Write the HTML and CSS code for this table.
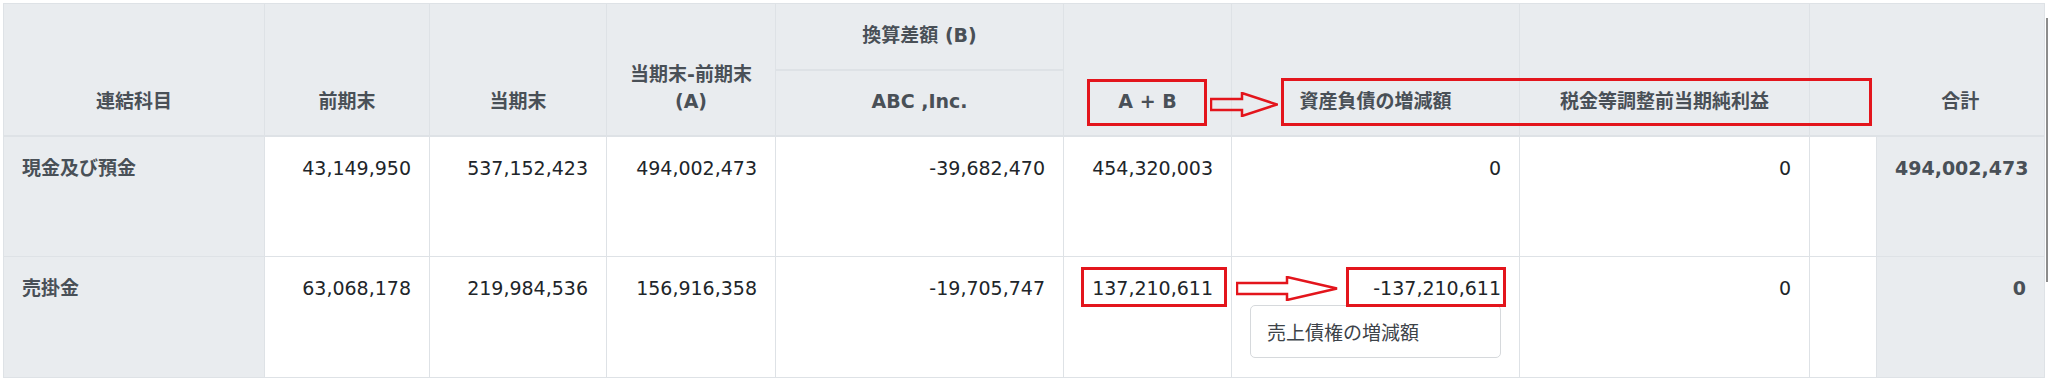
FILE: index.html
```html
<!DOCTYPE html>
<html lang="ja">
<head>
<meta charset="utf-8">
<title>連結科目</title>
<link rel="stylesheet" href="styles.css">
</head>
<body>
<div class="wrap">
  <table class="grid">
    <colgroup>
      <col class="c1"><col class="c2"><col class="c3"><col class="c4"><col class="c5">
      <col class="c6"><col class="c7"><col class="c8"><col class="c9"><col class="c10">
    </colgroup>
    <thead>
      <tr class="hr1">
        <th rowspan="2">連結科目</th>
        <th rowspan="2">前期末</th>
        <th rowspan="2">当期末</th>
        <th rowspan="2">当期末-前期末<br>(A)</th>
        <th>換算差額 (B)</th>
        <th rowspan="2">A + B</th>
        <th rowspan="2">資産負債の増減額</th>
        <th rowspan="2">税金等調整前当期純利益</th>
        <th rowspan="2" class="gap-h"></th>
        <th rowspan="2" class="sum-h">合計</th>
      </tr>
      <tr class="hr2">
        <th>ABC ,Inc.</th>
      </tr>
    </thead>
    <tbody>
      <tr class="br">
        <th>現金及び預金</th>
        <td>43,149,950</td>
        <td>537,152,423</td>
        <td>494,002,473</td>
        <td>-39,682,470</td>
        <td>454,320,003</td>
        <td>0</td>
        <td>0</td>
        <td class="gap"></td>
        <td class="total">494,002,473</td>
      </tr>
      <tr class="br">
        <th>売掛金</th>
        <td>63,068,178</td>
        <td>219,984,536</td>
        <td>156,916,358</td>
        <td>-19,705,747</td>
        <td>137,210,611</td>
        <td>
          <div>-137,210,611</div>
          <div class="note">売上債権の増減額</div>
        </td>
        <td>0</td>
        <td class="gap"></td>
        <td class="total">0</td>
      </tr>
    </tbody>
  </table>

  <div class="annot a1"></div>
  <div class="annot a2"></div>
  <div class="annot a3"></div>
  <div class="annot a4"></div>

  <svg class="arrow arr1" width="68" height="25" viewBox="0 0 68 25">
    <path d="M1 7 H32 V1 L67 12.5 L32 24 V18 H1 Z" fill="none" stroke="#e3151c" stroke-width="2.5" stroke-linejoin="miter"/>
  </svg>
  <svg class="arrow arr2" width="102" height="25" viewBox="0 0 102 25">
    <path d="M1 7 H51 V1 L101 12.5 L51 24 V18 H1 Z" fill="none" stroke="#e3151c" stroke-width="2.5" stroke-linejoin="miter"/>
  </svg>

  <div class="scroll"></div>
</div>
</body>
</html>
```

FILE: styles.css
```css
html, body {
  margin: 0;
  padding: 0;
  background: #ffffff;
}

body {
  font-family: "DejaVu Sans", "Noto Sans CJK JP", sans-serif;
  font-size: 19px;
  line-height: 27px;
  color: #212529;
}

.wrap {
  position: relative;
  padding: 3px 0 0 3px;
  width: 2045px;
  height: 377px;
  overflow: hidden;
}

.grid {
  border-collapse: collapse;
  table-layout: fixed;
  width: 2042px;
}

.c1 { width: 261px; }
.c2 { width: 165px; }
.c3 { width: 177px; }
.c4 { width: 169px; }
.c5 { width: 288px; }
.c6 { width: 168px; }
.c7 { width: 288px; }
.c8 { width: 290px; }
.c9 { width: 67px; }
.c10 { width: 168px; }

.grid th,
.grid td {
  border: 1px solid #dee2e6;
  padding: 18px;
}

.grid thead th {
  background: #e9ecef;
  color: #495057;
  font-weight: bold;
  text-align: center;
  vertical-align: bottom;
  border-bottom: 2px solid #dee2e6;
  padding: 0 8px 20px;
}

.hr1 { height: 66px; }
.hr2 { height: 66px; }

.grid thead th.gap-h {
  border-right-style: hidden;
}

.grid thead th.sum-h {
  border-left-style: hidden;
}

.br { height: 121px; }

.grid tbody th {
  background: #e9ecef;
  color: #495057;
  font-weight: bold;
  text-align: left;
  vertical-align: top;
}

.grid tbody td {
  text-align: right;
  vertical-align: top;
}

.grid tbody td.total {
  background: #e9ecef;
  color: #495057;
  font-weight: bold;
}

.note {
  margin-top: 3px;
  border: 1px solid #d6d9dc;
  border-radius: 5px;
  padding: 12px 16px;
  text-align: left;
  color: #3d4349;
  font-family: "Noto Sans CJK JP", sans-serif;
}

.annot {
  position: absolute;
  box-sizing: border-box;
  border: 3px solid #e3151c;
}

.a1 { left: 1087px; top: 79px; width: 120px; height: 47px; }
.a2 { left: 1281px; top: 78px; width: 591px; height: 48px; }
.a3 { left: 1081px; top: 267px; width: 146px; height: 40px; }
.a4 { left: 1346px; top: 267px; width: 160px; height: 40px; }

.arrow {
  position: absolute;
  display: block;
}

.arr1 { left: 1210px; top: 92px; }
.arr2 { left: 1236px; top: 276px; }

.scroll {
  position: absolute;
  left: 2046px;
  top: 18px;
  width: 2px;
  height: 264px;
  background: #8c8c8c;
}
```
